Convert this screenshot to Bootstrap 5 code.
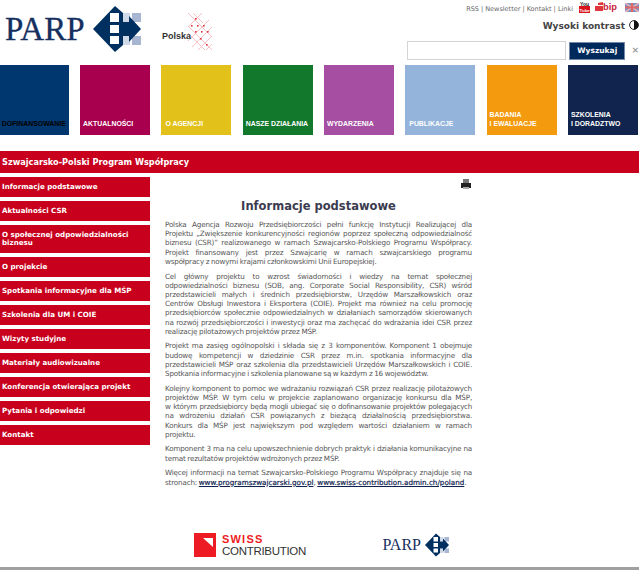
<!DOCTYPE html>
<html lang="pl">
<head>
  <meta charset="UTF-8">
  <meta name="viewport" content="width=device-width, initial-scale=1.0">
  <title>Informacje podstawowe - PARP</title>
  <link href="https://cdn.jsdelivr.net/npm/bootstrap@5.3.0/dist/css/bootstrap.min.css" rel="stylesheet">
  <style>
    body { font-family: "DejaVu Sans", Verdana, sans-serif; color: #555; background: #fff; overflow: hidden; }
    .page-wrap { width: 639px; height: 570px; border-bottom: 3px solid #a0a0a0; overflow: hidden; }
    .top-head { height: 65px; }
    .parp-name { font-family: "Liberation Serif", serif; font-size: 33px; line-height: 1; color: #15305f; margin: 13px 0 0 5px; width: 88px; -webkit-text-stroke: .3px #15305f; }
    .logo-diamond { width: 48px; height: 48px; margin-top: 5px; flex: none; }
    .logo-pl { width: 52px; height: 40px; margin: 12px 0 0 21px; flex: none; }
    .pl-word { font-size: 9px; font-weight: 700; fill: #333; font-family: "Liberation Sans", sans-serif; }
    .head-right { width: 232px; margin-left: auto; }
    .top-links { height: 16px; font-size: 6.5px; line-height: 9px; color: #666; }
    .links-txt { margin-top: 5px; }
    .ico-yt { width: 11px; height: 12px; margin: 1px 0 0 6px; flex: none; }
    .ico-bip { width: 22px; height: 10px; margin: 2px 0 0 5px; flex: none; }
    .ico-flag { width: 14px; height: 9px; margin: 3px 0 0 8px; flex: none; }
    .contrast-line { font-size: 9px; font-weight: 700; color: #444; height: 25px; padding-top: 4px; line-height: 12px; }
    .ico-half { width: 10px; height: 10px; }
    .search-box { width: 159px; height: 19px; border: 1px solid #d4d4d4; background: #fff; }
    .search-btn { width: 57px; height: 18px; margin: 1px 0 0 3px; background: #012a5c; border: 1px solid #7488a8; color: #fff; font-size: 7.5px; font-weight: 700; padding: 0; }
    .search-x { color: #999; font-size: 9px; font-weight: 700; margin: 3px 0 0 6px; }
    .tile-row { gap: 11.3px; margin-left: -1.2px; }
    .tile { width: 70px; height: 70px; flex: none; color: #fff; font: 700 6.9px/9px "Liberation Sans", sans-serif; padding: 0 0 7px 3px; }
    .tile-navy { background: #00376f; color: #000; }
    .tile-wine { background: #a8004f; }
    .tile-gold { background: #e2c11b; padding-left: 4px; }
    .tile-green { background: #12782c; }
    .tile-purple { background: #a64fa2; }
    .tile-sky { background: #94b4db; padding-left: 4px; }
    .tile-orange { background: #f39a0f; }
    .tile-ink { background: #10244e; }
    .red-title { height: 22px; margin-top: 16px; background: #c8001e; color: #fff; font-size: 8.2px; font-weight: 700; padding-left: 2px; line-height: 22px; }
    .side-menu { width: 150px; flex: none; gap: 4px; margin-top: 4px; }
    .side-link { background: #c8001e; color: #fff; font-size: 7.1px; font-weight: 700; line-height: 8px; padding: 6px 2px; text-decoration: none; }
    .main-col { width: 307px; margin-left: 15px; font-size: 7.2px; line-height: 9.2px; letter-spacing: -.18px; }
    .print-ico { width: 12px; height: 12px; display: block; margin: 5px 0 0 auto; }
    .main-col h1 { font-size: 11.5px; font-weight: 700; color: #3b3b50; text-align: center; margin: 9px 0 7px; line-height: 14px; letter-spacing: 0; }
    .main-col p { margin-bottom: 5.5px; }
    .ln { display: block; word-spacing: -.4px; text-align: justify; text-align-last: justify; }
    .ln-end { text-align-last: left; }
    .ln-tight { letter-spacing: -.3px; }
    .main-col a { color: #0f2350; -webkit-text-stroke: .2px #0f2350; letter-spacing: 0; }
    .foot-logos { margin-top: 46px; padding: 0 23px 0 29px; }
    .swiss-mark { width: 22px; height: 24px; flex: none; margin-right: 6px; }
    .swiss-word { font: 700 11px/12px "Liberation Sans", sans-serif; color: #ed1c24; letter-spacing: 1.2px; }
    .swiss-sub { font: 400 11.5px/13px "Liberation Sans", sans-serif; color: #333; letter-spacing: -.3px; }
    .parp-small { font: 400 16px/1 "Liberation Serif", serif; color: #15305f; letter-spacing: 0; }
    .logo-small { width: 24px; height: 24px; }
  </style>
</head>
<body>
  <svg width="0" height="0" class="d-block" aria-hidden="true">
    <symbol id="parp-mark" viewBox="0 0 48 48">
      <path fill="#d0d9e8" d="M28 8H37V17H28ZM28 31H37V40H28Z"/>
      <path fill="#a9b6d2" d="M39 8H48V17H39ZM39 31H48V40H39Z"/>
      <path fill="#00305f" d="M0 24 22 1 30 8V40L22 47Z"/>
      <path fill="#00305f" d="M26 17H36V11L48 24 36 37V31H26Z"/>
      <path fill="#fff" d="M17 8H26V17H17ZM17 20H26V28H17ZM17 31H26V39H17Z"/>
    </symbol>
  </svg>
  <div class="page-wrap">
    <!-- naglowek -->
    <div class="top-head d-flex">
      <div class="parp-name">PARP</div>
      <svg class="logo-diamond" role="img" aria-label="Logo PARP"><use href="#parp-mark"/></svg>
      <svg class="logo-pl" viewBox="0 0 52 40" role="img" aria-label="Polska">
        <g stroke="#f4b0b6" stroke-width=".8" fill="none">
          <path d="M26 1 50 25M31 1 41 11M26 14 50 38M26 21 43 38M40 1 26 15M47 8 26 29M50 15 30 35M50 24 36 38M50 32 44 38"/>
        </g>
        <g fill="#e0323c">
          <rect x="33" y="6" width="1.6" height="1.6"/><rect x="29" y="13" width="1.6" height="1.6"/><rect x="35" y="13" width="1.6" height="1.6"/><rect x="41" y="13" width="1.6" height="1.6"/>
          <rect x="33" y="19" width="1.6" height="1.6"/><rect x="39" y="19" width="1.6" height="1.6"/><rect x="45" y="19" width="1.6" height="1.6"/><rect x="38" y="26" width="1.6" height="1.6"/><rect x="44" y="32" width="1.6" height="1.6"/>
        </g>
        <text class="pl-word" x="0" y="27">Polska</text>
      </svg>
      <div class="head-right">
        <div class="top-links d-flex justify-content-end align-items-start">
          <span class="links-txt">RSS | Newsletter | Kontakt | Linki</span>
          <svg class="ico-yt" viewBox="0 0 11 12" role="img" aria-label="YouTube">
            <text x="1" y="4.5" font-size="5" font-weight="700" fill="#222" font-family="Liberation Sans, sans-serif">You</text>
            <rect y="5" width="11" height="7" fill="#d8131b"/>
            <text x=".6" y="10.5" font-size="4.4" font-weight="700" fill="#fff" font-family="Liberation Sans, sans-serif">Tube</text>
          </svg>
          <svg class="ico-bip" viewBox="0 0 22 10" role="img" aria-label="BIP">
            <path fill="#d8131b" d="M0 4H8V9H0ZM3 1 8 0V3H3Z" opacity=".85"/>
            <text x="8" y="8" font-size="9.3" font-weight="700" fill="#c8203c" font-family="Liberation Sans, sans-serif">bip</text>
          </svg>
          <svg class="ico-flag" viewBox="0 0 14 9" role="img" aria-label="English"><rect width="14" height="9" fill="#7f8fc0"/><path stroke="#e8b4bc" stroke-width="1.5" d="M0 0 14 9M14 0 0 9"/><path stroke="#d66" stroke-width="2" d="M7 0V9M0 4.5H14"/></svg>
        </div>
        <div class="contrast-line d-flex justify-content-end gap-1">
          <span>Wysoki kontrast</span>
          <svg class="ico-half" viewBox="0 0 10 10" aria-hidden="true"><circle cx="5" cy="5" r="4.4" fill="#fff" stroke="#222"/><path fill="#111" d="M5 .6a4.4 4.4 0 0 1 0 8.8Z"/></svg>
        </div>
        <form class="d-flex" onsubmit="return false">
          <input class="search-box" type="text" aria-label="Szukaj">
          <button class="search-btn" type="submit">Wyszukaj</button>
          <span class="search-x">×</span>
        </form>
      </div>
    </div>

    <!-- kafelki -->
    <div class="tile-row d-flex">
      <a class="tile tile-navy d-flex align-items-end text-decoration-none">DOFINANSOWANIE</a>
      <a class="tile tile-wine d-flex align-items-end text-decoration-none">AKTUALNOŚCI</a>
      <a class="tile tile-gold d-flex align-items-end text-decoration-none">O AGENCJI</a>
      <a class="tile tile-green d-flex align-items-end text-decoration-none">NASZE DZIAŁANIA</a>
      <a class="tile tile-purple d-flex align-items-end text-decoration-none">WYDARZENIA</a>
      <a class="tile tile-sky d-flex align-items-end text-decoration-none">PUBLIKACJE</a>
      <a class="tile tile-orange d-flex align-items-end text-decoration-none"><span>BADANIA<br>I EWALUACJE</span></a>
      <a class="tile tile-ink d-flex align-items-end text-decoration-none"><span>SZKOLENIA<br>I DORADZTWO</span></a>
    </div>

    <div class="red-title">Szwajcarsko-Polski Program Współpracy</div>

    <div class="d-flex">
      <nav class="side-menu d-flex flex-column">
        <a class="side-link">Informacje podstawowe</a>
        <a class="side-link">Aktualności CSR</a>
        <a class="side-link">O społecznej odpowiedzialności biznesu</a>
        <a class="side-link">O projekcie</a>
        <a class="side-link">Spotkania informacyjne dla MŚP</a>
        <a class="side-link">Szkolenia dla UM i COIE</a>
        <a class="side-link">Wizyty studyjne</a>
        <a class="side-link">Materiały audiowizualne</a>
        <a class="side-link">Konferencja otwierająca projekt</a>
        <a class="side-link">Pytania i odpowiedzi</a>
        <a class="side-link">Kontakt</a>
      </nav>
      <main class="main-col">
        <svg class="print-ico" viewBox="0 0 12 12" aria-hidden="true">
          <path fill="#777" d="M3 1H9V5H3Z"/><path fill="#222" d="M1 5H11V10H1Z"/><path fill="#aaa" d="M3 9H9V11H3Z"/>
        </svg>
        <h1>Informacje podstawowe</h1>
        <p>
          <span class="ln">Polska Agencja Rozwoju Przedsiębiorczości pełni funkcję Instytucji Realizującej dla</span>
          <span class="ln">Projektu „Zwiększenie konkurencyjności regionów poprzez społeczną odpowiedzialność</span>
          <span class="ln">biznesu (CSR)” realizowanego w ramach Szwajcarsko-Polskiego Programu Współpracy.</span>
          <span class="ln">Projekt finansowany jest przez Szwajcarię w ramach szwajcarskiego programu</span>
          <span class="ln ln-end">współpracy z nowymi krajami członkowskimi Unii Europejskiej.</span>
        </p>
        <p>
          <span class="ln">Cel główny projektu to wzrost świadomości i wiedzy na temat społecznej</span>
          <span class="ln">odpowiedzialności biznesu (SOB, ang. Corporate Social Responsibility, CSR) wśród</span>
          <span class="ln">przedstawicieli małych i średnich przedsiębiorstw, Urzędów Marszałkowskich oraz</span>
          <span class="ln">Centrów Obsługi Inwestora i Eksportera (COIE). Projekt ma również na celu promocję</span>
          <span class="ln">przedsiębiorców społecznie odpowiedzialnych w działaniach samorządów skierowanych</span>
          <span class="ln">na rozwój przedsiębiorczości i inwestycji oraz ma zachęcać do wdrażania idei CSR przez</span>
          <span class="ln ln-end">realizację pilotażowych projektów przez MŚP.</span>
        </p>
        <p>
          <span class="ln">Projekt ma zasięg ogólnopolski i składa się z 3 komponentów. Komponent 1 obejmuje</span>
          <span class="ln">budowę kompetencji w dziedzinie CSR przez m.in. spotkania informacyjne dla</span>
          <span class="ln">przedstawicieli MŚP oraz szkolenia dla przedstawicieli Urzędów Marszałkowskich i COIE.</span>
          <span class="ln ln-end">Spotkania informacyjne i szkolenia planowane są w każdym z 16 województw.</span>
        </p>
        <p>
          <span class="ln">Kolejny komponent to pomoc we wdrażaniu rozwiązań CSR przez realizację pilotażowych</span>
          <span class="ln">projektów MŚP. W tym celu w projekcie zaplanowano organizację konkursu dla MŚP,</span>
          <span class="ln ln-tight">w którym przedsiębiorcy będą mogli ubiegać się o dofinansowanie projektów polegających</span>
          <span class="ln">na wdrożeniu działań CSR powiązanych z bieżącą działalnością przedsiębiorstwa.</span>
          <span class="ln">Konkurs dla MŚP jest największym pod względem wartości działaniem w ramach</span>
          <span class="ln ln-end">projektu.</span>
        </p>
        <p>
          <span class="ln">Komponent 3 ma na celu upowszechnienie dobrych praktyk i działania komunikacyjne na</span>
          <span class="ln ln-end">temat rezultatów projektów wdrożonych przez MŚP.</span>
        </p>
        <p>
          <span class="ln">Więcej informacji na temat Szwajcarsko-Polskiego Programu Współpracy znajduje się na</span>
          <span class="ln ln-end">stronach: <a href="#">www.programszwajcarski.gov.pl</a>, <a href="#">www.swiss-contribution.admin.ch/poland</a>.</span>
        </p>
        <div class="foot-logos d-flex justify-content-between align-items-center">
          <div class="d-flex align-items-center">
            <svg class="swiss-mark" viewBox="0 0 22 24" aria-hidden="true"><path fill="#ed1c24" d="M0 0H22V24H0Z"/><path fill="#fff" d="M9 5H19V14Z"/></svg>
            <div><div class="swiss-word">SWISS</div><div class="swiss-sub">CONTRIBUTION</div></div>
          </div>
          <div class="d-flex align-items-center gap-1 parp-small">PARP <svg class="logo-small" aria-hidden="true"><use href="#parp-mark"/></svg></div>
        </div>
      </main>
    </div>
  </div>
  <script src="https://cdn.jsdelivr.net/npm/bootstrap@5.3.0/dist/js/bootstrap.bundle.min.js"></script>
</body>
</html>
